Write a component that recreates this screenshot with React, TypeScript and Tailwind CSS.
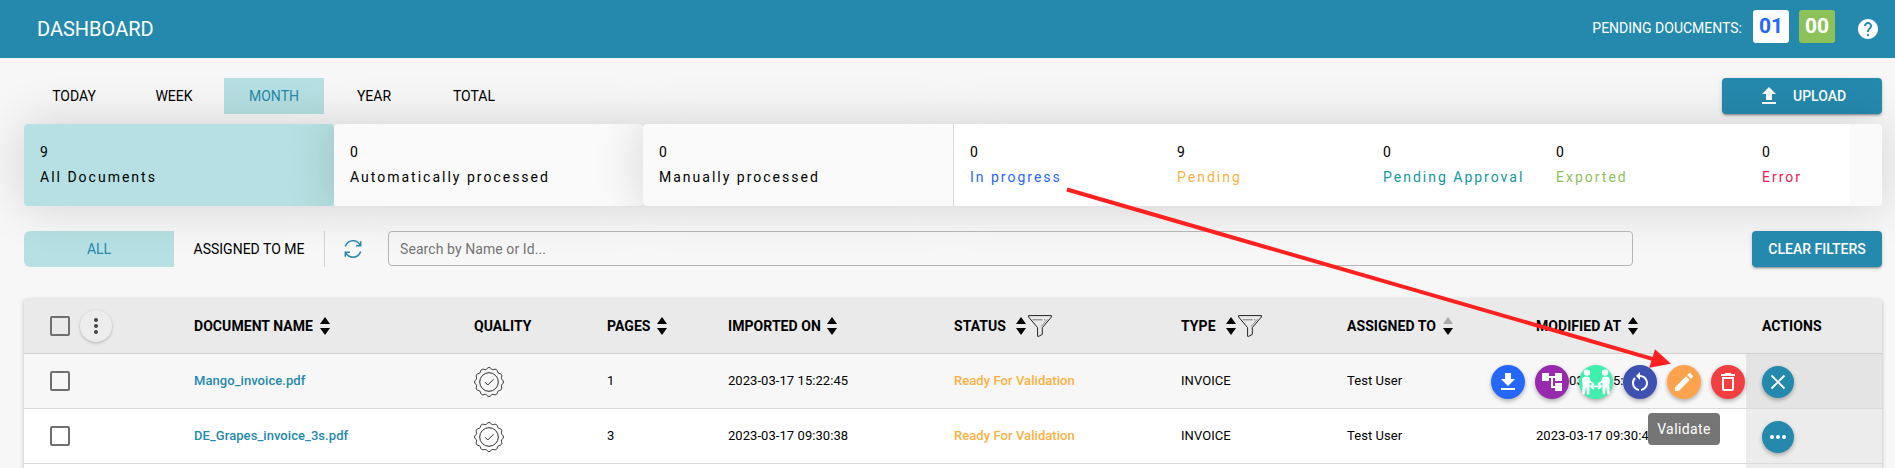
import React from "react";

const COLS =
  "grid grid-cols-[170px_280px_133px_121px_226px_227px_166px_189px_210px_136px]";

function Icon({ d, className = "size-6" }: { d: string; className?: string }) {
  return (
    <svg viewBox="0 0 24 24" className={className} fill="currentColor">
      <path d={d} />
    </svg>
  );
}

const UPLOAD = "M9 16h6v-6h4l-7-7-7 7h4zm-4 2h14v2H5z";
const DOWNLOAD = "M19 9h-4V3H9v6H5l7 7 7-7zM5 18v2h14v-2H5z";
const TREE = "M22 11V3h-7v3H9V3H2v8h7V8h2v10h4v3h7v-8h-7v3h-2V8h2v3z";
const RESTART =
  "M12 5V2L8 6l4 4V7c3.31 0 6 2.69 6 6 0 2.97-2.17 5.43-5 5.91v2.02c3.95-.49 7-3.85 7-7.93 0-4.42-3.58-8-8-8zM6 13c0-1.65.67-3.15 1.76-4.24L6.34 7.34C4.9 8.79 4 10.79 4 13c0 4.08 3.05 7.44 7 7.93v-2.02c-2.83-.48-5-2.94-5-5.91z";
const EDIT =
  "M3 17.25V21h3.75L17.81 9.94l-3.75-3.75L3 17.25zM20.71 7.04c.39-.39.39-1.02 0-1.41l-2.34-2.34a.9959.9959 0 0 0-1.41 0l-1.83 1.83 3.75 3.75 1.83-1.83z";
const TRASH =
  "M6 19c0 1.1.9 2 2 2h8c1.1 0 2-.9 2-2V7H6v12zM8 9h8v10H8V9zm7.5-5l-1-1h-5l-1 1H5v2h14V4z";
const HELP =
  "M12 2C6.48 2 2 6.48 2 12s4.48 10 10 10 10-4.48 10-10S17.52 2 12 2zm1 17h-2v-2h2v2zm2.07-7.75-.9.92C13.45 12.9 13 13.5 13 15h-2v-.5c0-1.1.45-2.1 1.17-2.83l1.24-1.26c.37-.36.59-.86.59-1.41 0-1.1-.9-2-2-2s-2 .9-2 2H8c0-2.21 1.79-4 4-4s4 1.79 4 4c0 .88-.36 1.68-.93 2.25z";
const DOTS_V =
  "M12 8c1.1 0 2-.9 2-2s-.9-2-2-2-2 .9-2 2 .9 2 2 2zm0 2c-1.1 0-2 .9-2 2s.9 2 2 2 2-.9 2-2-.9-2-2-2zm0 6c-1.1 0-2 .9-2 2s.9 2 2 2 2-.9 2-2-.9-2-2-2z";

function Sort({ upMuted = false }: { upMuted?: boolean }) {
  return (
    <svg viewBox="0 0 10 18" className="h-[18px] w-[10px] shrink-0">
      <path d="M5 0L10 7H0z" fill={upMuted ? "#a9a9a9" : "#000"} />
      <path d="M0 11H10L5 18z" fill="#000" />
    </svg>
  );
}

function Funnel() {
  return (
    <svg
      viewBox="0 0 24 22"
      className="ml-[2px] h-[22px] w-6 shrink-0"
      fill="none"
      stroke="#222"
      strokeWidth="1"
    >
      <path d="M.6 .6H23.4V2L14.3 12.6V19.4L10.6 21.4H9.6V12.6L.6 2z" />
      <path d="M4.5 4.8H14.5M16 4.8h1.2" stroke="#777" />
      <path d="M19.5 4.2L13 11.5" stroke="#777" strokeWidth=".8" />
    </svg>
  );
}

function sealPath() {
  const pts: string[] = [];
  const n = 96;
  for (let i = 0; i < n; i++) {
    const a = (i / n) * Math.PI * 2;
    const r = 13.7 + 0.8 * Math.cos(a * 12);
    pts.push(`${(15 + r * Math.cos(a)).toFixed(2)} ${(15 + r * Math.sin(a)).toFixed(2)}`);
  }
  return "M" + pts.join("L") + "z";
}
const SEAL = sealPath();

function Seal() {
  return (
    <svg
      viewBox="0 0 30 30"
      className="mt-[2px] size-[30px]"
      fill="none"
      stroke="#2b2b2b"
      strokeWidth="1"
    >
      <path d={SEAL} />
      <circle cx="15" cy="15" r="9.3" />
      <path d="M11 15.2L13.8 18L19.6 12.2" />
    </svg>
  );
}

function People() {
  return (
    <svg viewBox="0 0 30 26" className="h-[26px] w-[30px] shrink-0" fill="#fff">
      <circle cx="6" cy="3.6" r="3.2" />
      <circle cx="24" cy="3.6" r="3.2" />
      <path d="M4 7.800h3q1.500 0 2 1.600l.8 3 2.300 1q.8.5.4 1.200-.4.500-1.200.2L8.600 13.800V16.500L8.400 24.200q-.1 1.300-1.400 1.300T5.700 24.200L5.400 18.500H4.800L4 24.200q-.2 1.300-1.500 1.300T1.300 24.200L1.600 17 1.200 10.500Q1.400 7.800 4 7.800z" />
      <path d="M26 7.800h-3q-1.500 0-2 1.600l-.8 3-2.300 1q-.8.5-.4 1.200.4.500 1.200.2L21.400 13.800V16.500L21.600 24.200q.1 1.300 1.400 1.300T24.300 24.200L24.600 18.500H25.200L26 24.200q.2 1.300 1.500 1.300T28.700 24.200L28.400 17 28.800 10.500Q28.600 7.800 26 7.800z" />
      <path
        d="M10 17.300H20M12.800 14.400L9.800 17.300L12.800 20.200M17.200 14.400L20.200 17.300L17.200 20.200"
        fill="none"
        stroke="#fff"
        strokeWidth="1.800"
      />
    </svg>
  );
}

function Refresh() {
  return (
    <svg
      viewBox="0 0 18 20"
      className="h-5 w-[18px]"
      fill="none"
      stroke="#2589ae"
      strokeWidth="1.500"
    >
      <path d="M1.300 7.600C2.600 3.800 5.500 1.800 9 1.800C12.200 1.800 14.800 3.500 16.200 6.200" />
      <path d="M16.700 2.300V6.700H12" />
      <path d="M16.700 12.400C15.400 16.200 12.500 18.200 9 18.200C5.800 18.200 3.200 16.500 1.800 13.800" />
      <path d="M1.300 17.700V13.300H6" />
    </svg>
  );
}

function Checkbox() {
  return <div className="ml-[26px] size-5 rounded-[2px] border-2 border-[#6f6f6f]" />;
}

const RAISED =
  "shadow-[0_3px_1px_-2px_rgba(0,0,0,.2),0_2px_2px_0_rgba(0,0,0,.14),0_1px_5px_0_rgba(0,0,0,.12)]";

function Stat({ value, label, color = "" }: { value: string; label: string; color?: string }) {
  return (
    <div className="flex flex-col pl-4 pt-[18px]">
      <span className="h-[25px] leading-5">{value}</span>
      <span className={`whitespace-nowrap leading-5 tracking-[2px] ${color}`}>{label}</span>
    </div>
  );
}

const GLOW = "shadow-[0_0_50px_rgba(0,0,0,.16)]";

function RowCells({
  name,
  pages,
  imported,
  modified,
}: {
  name: string;
  pages: string;
  imported: string;
  modified: string;
}) {
  return (
    <>
      <Checkbox />
      <span className="font-medium text-[#2589ae]">{name}</span>
      <Seal />
      <span>{pages}</span>
      <span>{imported}</span>
      <span className="font-medium text-[#fdb03f]">Ready For Validation</span>
      <span>INVOICE</span>
      <span>Test User</span>
      <span>{modified}</span>
    </>
  );
}

function Round({ className, children }: { className: string; children: React.ReactNode }) {
  return (
    <div
      className={`flex size-[34px] items-center justify-center rounded-full text-white shadow-[0_2px_4px_rgba(0,0,0,.3)] ${className}`}
    >
      {children}
    </div>
  );
}

export default function App() {
  return (
    <div className="relative h-[468px] w-[1895px] overflow-hidden bg-[#f7f7f7] font-['Roboto',sans-serif] text-sm text-black">
      <header className="relative z-10 flex h-[58px] items-center justify-between bg-[#2589ae] pl-[37px] pr-[15px] text-white">
        <h1 className="text-[20px] leading-6">DASHBOARD</h1>
        <div className="flex items-center">
          <span className="mr-[11px] mt-[-2px]">PENDING DOUCMENTS:</span>
          <span className="mb-[5px] mr-[10px] flex h-[33px] w-9 justify-center rounded-[3px] bg-white text-[21px] font-bold leading-8 text-[#2567fb]">
            01
          </span>
          <span className="mb-[5px] mr-[21px] flex h-[33px] w-9 justify-center rounded-[3px] bg-[#8dc25a] text-[21px] font-bold leading-8">
            00
          </span>
          <Icon d={HELP} />
        </div>
      </header>

      <div className="mx-6 mt-5 flex h-9 w-[1858px] justify-between">
        <nav className="flex">
          {["TODAY", "WEEK", "MONTH", "YEAR", "TOTAL"].map((t) => (
            <div
              key={t}
              className={`flex w-[100px] items-center justify-center ${
                t === "MONTH" ? "bg-[#b6e0e3] text-[#2589ae]" : ""
              }`}
            >
              {t}
            </div>
          ))}
        </nav>
        <button
          className={`flex w-40 items-center rounded bg-[#2589ae] pl-[35px] font-medium text-white ${RAISED}`}
        >
          <Icon d={UPLOAD} />
          <span className="ml-[12px]">UPLOAD</span>
        </button>
      </div>

      <section className="relative mx-6 mt-[10px] grid h-[82px] w-[1858px] grid-cols-[310px_309px_310px_929px]">
        <div className={`z-[1] rounded bg-[#b6e0e3] ${GLOW}`}>
          <Stat value="9" label="All Documents" />
        </div>
        <div className={`z-[2] rounded bg-[#fafafa] ${GLOW}`}>
          <Stat value="0" label="Automatically processed" />
        </div>
        <div className={`z-[3] rounded-l bg-[#fafafa] ${GLOW}`}>
          <Stat value="0" label="Manually processed" />
        </div>
        <div className={`rounded-r bg-[#fafafa] ${GLOW}`}>
          <div className="relative z-[4] grid h-[82px] w-[897px] grid-cols-[207px_206px_173px_206px_104px] rounded-r border-l border-[#d8d8d8] bg-white">
            <Stat value="0" label="In progress" color="text-[#2567fb]" />
            <Stat value="9" label="Pending" color="text-[#fdb03f]" />
            <Stat value="0" label="Pending Approval" color="text-[#0f98a0]" />
            <Stat value="0" label="Exported" color="text-[#8dc25a]" />
            <Stat value="0" label="Error" color="text-[#f5154f]" />
          </div>
        </div>
      </section>

      <section className="relative mx-6 mt-[25px] flex h-9 w-[1858px] items-center">
        <div className="flex h-9 w-[150px] items-center justify-center rounded-l-[6px] bg-[#b6e0e3] text-[#2589ae]">
          ALL
        </div>
        <div className="flex h-9 w-[151px] items-center justify-center border-r border-[#d3d3d3]">
          ASSIGNED TO ME
        </div>
        <div className="ml-[19px]">
          <Refresh />
        </div>
        <div className="mb-px ml-[26px] flex h-[35px] w-[1245px] items-center rounded border border-[#b5b5b5] pl-[11px] tracking-[.08px] text-[#757575]">
          Search by Name or Id...
        </div>
        <button
          className={`ml-auto h-9 w-[130px] rounded bg-[#2589ae] font-medium text-white ${RAISED}`}
        >
          CLEAR FILTERS
        </button>
      </section>

      <section className="mx-6 mt-[31px] h-[200px] w-[1858px] rounded-t bg-white text-[13px] tracking-[.06px] shadow-[0_2px_4px_rgba(0,0,0,.25)]">
        <div
          className={`${COLS} h-14 items-center rounded-t border-b border-[#cfcfcf] bg-[#eaeaea] text-sm font-bold`}
        >
          <div className="flex items-center">
            <Checkbox />
            <div className="ml-[10px] flex size-8 items-center justify-center rounded-full bg-[#ededed] text-[#444] shadow-[0_1px_3px_rgba(0,0,0,.25)]">
              <Icon d={DOTS_V} />
            </div>
          </div>
          <span className="flex items-center gap-[7px]">DOCUMENT NAME <Sort /></span>
          <span>QUALITY</span>
          <span className="flex items-center gap-[6px]">PAGES <Sort /></span>
          <span className="flex items-center gap-[6px]">IMPORTED ON <Sort /></span>
          <span className="flex items-center">
            <span className="w-[62px]">STATUS</span><Sort /><Funnel />
          </span>
          <span className="flex items-center">
            <span className="w-[45px]">TYPE</span><Sort /><Funnel />
          </span>
          <span className="flex items-center gap-[7px]">ASSIGNED TO <Sort upMuted /></span>
          <span className="flex items-center gap-[7px]">MODIFIED AT <Sort /></span>
          <span className="pl-4">ACTIONS</span>
        </div>
        <div className={`${COLS} relative h-[55px] items-center border-b border-[#dadada] bg-[#f7f7f7]`}>
          <RowCells
            name="Mango_invoice.pdf"
            pages="1"
            imported="2023-03-17 15:22:45"
            modified="2023-03-17 15:23:05"
          />
          <div className="flex h-full items-center self-stretch bg-[#e4e4e4] pl-4 pt-[2px]">
            <Round className="size-8! bg-[#2589ae]">
              <svg viewBox="0 0 16 16" className="size-4" stroke="#fff" strokeWidth="1.800">
                <path d="M1.500 1.500L14.500 14.500M14.500 1.500L1.500 14.500" />
              </svg>
            </Round>
          </div>
          <div className="absolute right-[137px] top-[11px] flex gap-[10px]">
            <Round className="bg-[#2567fb]"><Icon d={DOWNLOAD} /></Round>
            <Round className="bg-[#982bad]"><Icon d={TREE} /></Round>
            <Round className="bg-[#40efad]"><People /></Round>
            <Round className="bg-[#3f51b0]"><Icon d={RESTART} /></Round>
            <Round className="bg-[#fda34d]"><Icon d={EDIT} /></Round>
            <Round className="bg-[#f33f3f]"><Icon d={TRASH} /></Round>
          </div>
        </div>
        <div className={`${COLS} relative h-[55px] items-center border-b border-[#dadada] bg-white`}>
          <RowCells
            name="DE_Grapes_invoice_3s.pdf"
            pages="3"
            imported="2023-03-17 09:30:38"
            modified="2023-03-17 09:30:41"
          />
          <div className="flex h-full items-center self-stretch bg-[#ececec] pl-4 pt-[2px]">
            <Round className="size-8! bg-[#2589ae]">
              <svg viewBox="0 0 16 4" className="h-1 w-4" fill="#fff">
                <circle cx="2" cy="2" r="2" />
                <circle cx="8" cy="2" r="2" />
                <circle cx="14" cy="2" r="2" />
              </svg>
            </Round>
          </div>
          <div className="absolute right-[162px] top-1 flex h-8 w-[72px] items-center justify-center rounded bg-[#757575] text-sm tracking-[.4px] text-white">
            Validate
          </div>
        </div>
        <div className={`${COLS} h-10`}>
          <div className="col-start-10 bg-[#ececec]" />
        </div>
      </section>

      <svg viewBox="0 0 1895 468" className="pointer-events-none absolute inset-0 z-20 h-[468px] w-[1895px]">
        <path d="M1067 189.500L1654 359.300" stroke="#ff2020" strokeWidth="4" />
        <path d="M1671 363.700L1655 349.300L1649.300 367.700z" fill="#ff2020" />
      </svg>
    </div>
  );
}
